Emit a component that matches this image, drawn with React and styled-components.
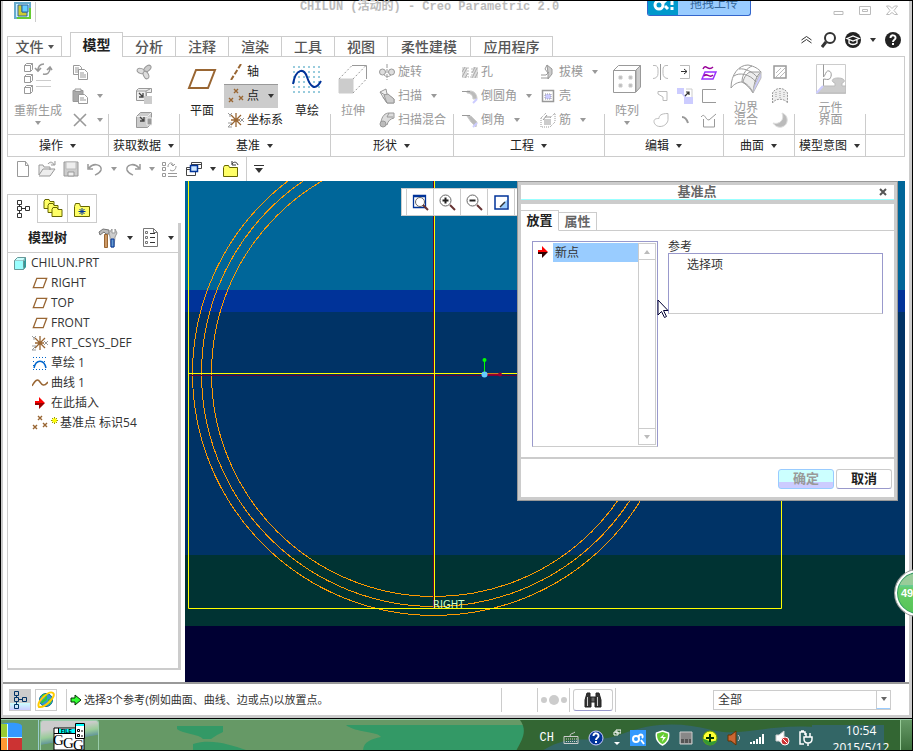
import React, { useState } from "react";
import styled, { createGlobalStyle } from "styled-components";

const GlobalStyle = createGlobalStyle`
  * {
    box-sizing: border-box;
  }
  body {
    margin: 0;
    background: #000;
    color: #333;
    font-family: "Liberation Sans", "Noto Sans CJK SC", sans-serif;
    font-size: 12px;
    line-height: 14px;
  }
  button, select, input {
    font: inherit;
    color: inherit;
    margin: 0;
    padding: 0;
    border: none;
    background: none;
  }
  svg {
    display: block;
    flex: none;
  }
`;

/* ---------- window frame ---------- */

const Screen = styled.div`
  position: relative;
  display: flex;
  flex-direction: column;
  min-height: 100vh;
  padding: 1px;
  overflow: hidden;
  background: #000;
`;

const Window = styled.div`
  flex: 1;
  display: flex;
  flex-direction: column;
  background: #fff;
  border-left: 2px solid #ccc;
  border-right: 3px solid #ccc;
  border-bottom: 3px solid #ccc;
`;

const TitleBar = styled.header`
  position: relative;
  display: flex;
  align-items: flex-start;
  height: 31px;
  padding: 1px 11px 0 11px;
`;

const AppIcon = styled.div`
  height: 20px;
  padding-right: 4px;
  border-right: 1px solid #ccc;
`;

const Title = styled.h1`
  flex: 1;
  margin: -2px 0 0;
  padding-right: 10px;
  text-align: center;
  color: #bbb;
  font: bold 12px/14px "Liberation Mono", "Noto Sans CJK SC", monospace;
  white-space: pre;
`;

const WindowButtons = styled.div`
  display: flex;
  gap: 15px;
  padding-top: 3px;
`;

const UploadBadge = styled.button`
  position: absolute;
  top: 0;
  right: 158px;
  display: flex;
  width: 104px;
  height: 15px;
  overflow: hidden;
  border: 1px solid #3366cc;
  border-top: none;
  border-radius: 0 0 3px 3px;
  background: #99ccff;
  color: #336699;
`;

const BadgeText = styled.span`
  flex: 1;
  margin-top: -4px;
  font-size: 12px;
  line-height: 14px;
`;

/* ---------- tabs ---------- */

const TabRow = styled.nav`
  display: flex;
  align-items: flex-end;
  height: 24px;
  padding: 0 4px;
`;

const FileTab = styled.button`
  display: flex;
  align-items: center;
  justify-content: center;
  gap: 4px;
  width: 55px;
  height: 20px;
  margin-right: 8px;
  border: 1px solid #ccc;
  border-bottom: none;
  color: #555;
  font-size: 14px;
  font-weight: 500;
`;

const Tab = styled.button`
  width: ${(p) => p.$w || 53}px;
  height: ${(p) => (p.$active ? 25 : 20)}px;
  margin-bottom: ${(p) => (p.$active ? -1 : 0)}px;
  border: 1px solid #ccc;
  border-left-width: ${(p) => (p.$active ? 1 : 0)}px;
  border-bottom: none;
  background: #fff;
  color: ${(p) => (p.$active ? "#222" : "#555")};
  font-size: 14px;
  font-weight: ${(p) => (p.$active ? 700 : 500)};
  line-height: 18px;
  position: relative;
`;

const HeaderTools = styled.div`
  display: flex;
  align-items: center;
  gap: 9px;
  height: 16px;
  margin: 0 4px auto auto;
`;

const IconButton = styled.button`
  display: flex;
  align-items: center;
  justify-content: center;
`;

/* ---------- ribbon ---------- */

const Ribbon = styled.section`
  display: flex;
  margin: 0 4px;
  border: 1px solid #ccc;
`;

const GroupBox = styled.div`
  display: flex;
  flex-direction: column;
  ${(p) => (p.$w ? `flex: none; width: ${p.$w}px;` : "flex: 1;")}
  background: linear-gradient(#ccc, #ccc) right bottom / ${(p) => (p.$w ? 1 : 0)}px 42px no-repeat;
`;

const GroupBody = styled.div`
  display: flex;
  justify-content: ${(p) => (p.$center ? "center" : "flex-start")};
  height: 77px;
  padding-top: 3px;
`;

const GroupLabel = styled.button`
  display: flex;
  align-items: center;
  justify-content: center;
  gap: 7px;
  height: 22px;
  padding-right: 2px;
  border-top: 1px solid #ccc;
  color: #222;
`;

const BigButton = styled.button`
  display: flex;
  flex-direction: column;
  align-items: center;
  width: ${(p) => p.$w}px;
  height: 72px;
  color: ${(p) => (p.$off ? "#999" : "#222")};
  line-height: 12px;
`;

const BigIcon = styled.span`
  display: flex;
  align-items: center;
  height: 38px;
  margin-bottom: ${(p) => (p.$tight ? 4 : 7)}px;
`;

const BigCaret = styled.span`
  padding-top: 4px;
`;

const Column = styled.div`
  width: ${(p) => p.$w}px;
`;

const SmallButton = styled.button`
  display: flex;
  align-items: center;
  gap: 3px;
  width: ${(p) => (p.$on ? "54px" : "auto")};
  height: 24px;
  padding-left: 3px;
  background: ${(p) => (p.$on ? "#ccc" : "none")};
  box-shadow: ${(p) => (p.$on ? "inset 0 1px #999" : "none")};
  color: ${(p) => (p.$off ? "#999" : "#222")};
  white-space: nowrap;
`;

const SmallIcon = styled.span`
  display: flex;
  justify-content: center;
  width: 17px;
`;

const CaretSlot = styled.span`
  padding-left: 6px;
`;

/* ---------- quick access ---------- */

const QuickBar = styled.div`
  display: flex;
  align-items: center;
  gap: 7px;
  height: 24px;
  padding-left: 12px;
`;

const QuickSeparator = styled.span`
  align-self: stretch;
  width: 1px;
  background: #ccc;
`;

/* ---------- work area ---------- */

const Work = styled.main`
  flex: 1;
  display: flex;
  min-height: 501px;
  padding-right: 4px;
`;

const SidePanel = styled.aside`
  display: flex;
  flex-direction: column;
  width: 182px;
  padding: 13px 4px 12px;
`;

const SideTabs = styled.div`
  display: flex;
`;

const SideTab = styled.button`
  display: flex;
  align-items: center;
  justify-content: center;
  width: 30px;
  height: 29px;
  border: 1px solid #ccc;
  border-right-width: ${(p) => (p.$last ? 1 : 0)}px;
  border-bottom-width: ${(p) => (p.$active ? 0 : 1)}px;
`;

const TreeBox = styled.div`
  flex: 1;
  border: 1px solid #ccc;
  border-top: none;
  border-right-width: 3px;
  border-bottom-width: 2px;
`;

const TreeHead = styled.div`
  display: flex;
  align-items: center;
  gap: 9px;
  height: 30px;
  padding: 0 4px 0 20px;
  border-bottom: 1px solid #ccc;
`;

const TreeTitle = styled.h2`
  flex: 1;
  margin: 0;
  color: #222;
  font-size: 13px;
  font-weight: 700;
`;

const TreeList = styled.ul`
  margin: 0;
  padding: 0;
  list-style: none;
  font-family: "Open Sans", "Noto Sans CJK SC", sans-serif;
`;

const TreeRow = styled.li`
  display: flex;
  align-items: center;
  gap: 2px;
  height: 20px;
  padding-left: ${(p) => (p.$root ? 2 : 22)}px;
  white-space: nowrap;
`;

const TreeIcon = styled.span`
  display: flex;
  justify-content: center;
  width: 19px;
`;

const Canvas = styled.div`
  position: relative;
  flex: 1;
  overflow: hidden;
  background: #000033;
`;

const Drawing = styled.svg`
  position: absolute;
  inset: 0;
  width: 100%;
  height: 100%;
`;

const ViewTools = styled.div`
  position: absolute;
  left: 216px;
  top: 7px;
  display: flex;
  height: 28px;
  padding-left: 4px;
  border: 1px solid #ccc;
  background: #fff;
`;

const ViewButton = styled.button`
  display: flex;
  align-items: center;
  justify-content: center;
  width: 27px;
  border-left: 1px solid #ccc;
`;

/* ---------- datum point dialog ---------- */

const Dialog = styled.section`
  position: absolute;
  left: 332px;
  top: 0;
  width: 381px;
  border: 1px solid #999;
  background: #ccc;
  padding: 3px;
`;

const DialogTitle = styled.div`
  display: flex;
  align-items: center;
  height: 15px;
  padding: 0 7px 0 18px;
  border-bottom: 1px solid #99ffff;
  background: #fff;
  color: #666;
  font-weight: 700;
`;

const DialogName = styled.h2`
  flex: 1;
  margin: 0;
  padding-right: 24px;
  text-align: center;
  font-size: 13px;
  line-height: 14px;
`;

const DialogBody = styled.div`
  margin-top: 4px;
  background: #fff;
`;

const DialogTabs = styled.div`
  display: flex;
  align-items: flex-end;
  height: 27px;
  box-shadow: inset 0 -1px #ccc;
`;

const DialogTab = styled.button`
  width: 38px;
  height: ${(p) => (p.$active ? 21 : 19)}px;
  border-top: 1px solid #ccc;
  border-right: 1px solid #ccc;
  border-bottom: 1px solid ${(p) => (p.$active ? "#fff" : "#ccc")};
  background: #fff;
  color: ${(p) => (p.$active ? "#222" : "#666")};
  font-size: 13px;
  font-weight: 700;
`;

const DialogFields = styled.div`
  display: flex;
  align-items: flex-start;
  gap: 10px;
  height: 226px;
  padding: 10px 10px 0 11px;
`;

const PointList = styled.div`
  display: flex;
  width: 126px;
  height: 206px;
  border: 1px solid #9999cc;
  border-bottom-color: #ccc;
`;

const PointRow = styled.div`
  flex: 1;
  display: flex;
  align-items: center;
  height: 20px;
  padding-left: 4px;
`;

const PointName = styled.span`
  flex: 1;
  height: 19px;
  margin-left: 4px;
  padding: 3px 2px;
  background: #99ccff;
`;

const ScrollBar = styled.div`
  display: flex;
  flex-direction: column;
  justify-content: space-between;
  width: 18px;
  margin: 1px 1px 1px 0;
  border: 1px solid #ccc;
`;

const ScrollButton = styled.button`
  display: flex;
  align-items: center;
  justify-content: center;
  height: 16px;
  border: 0 solid #ccc;
  border-bottom-width: ${(p) => (p.$up ? 1 : 0)}px;
  border-top-width: ${(p) => (p.$up ? 0 : 1)}px;
`;

const References = styled.div`
  width: 215px;
  line-height: 12px;
`;

const ReferenceBox = styled.div`
  height: 61px;
  padding: 5px 18px;
  border: 1px solid #9999cc;
  border-bottom-color: #ccc;
`;

const DialogFooter = styled.div`
  display: flex;
  justify-content: flex-end;
  gap: 2px;
  height: 38px;
  margin-top: 2px;
  padding: 10px 2px 0;
  background: #fff;
`;

const DialogButton = styled.button`
  width: 56px;
  height: 20px;
  border: 1px solid ${(p) => (p.$off ? "#99ccff" : "#ccc")};
  border-bottom-color: ${(p) => (p.$off ? "#99ccff" : "#9999cc")};
  border-radius: 3px;
  background: ${(p) => (p.$off ? "linear-gradient(#ccffff 65%, #ccccff 65%)" : "#fff")};
  color: ${(p) => (p.$off ? "#999" : "#222")};
  font-size: 13px;
  font-weight: 700;
  line-height: 16px;
`;

const Cursor = styled.div`
  position: absolute;
  left: 472px;
  top: 118px;
`;

/* ---------- status bar ---------- */

const StatusBar = styled.footer`
  display: flex;
  align-items: center;
  height: 33px;
  padding: 0 18px 0 6px;
  border-top: 2px solid #999;
`;

const StatusButton = styled.button`
  display: flex;
  align-items: center;
  justify-content: center;
  width: 22px;
  height: 22px;
  margin-right: 4px;
  border: 1px solid #ccc;
  background: ${(p) => (p.$on ? "linear-gradient(#ccc 65%, #ccffff 65%, #ccccff)" : "#fff")};
`;

const StatusText = styled.p`
  flex: 1;
  display: flex;
  align-items: center;
  gap: 2px;
  height: 22px;
  margin: 0 0 0 5px;
  padding-left: 3px;
  border-left: 1px solid #ccc;
  font-size: 11px;
  white-space: nowrap;
`;

const StatusCell = styled.div`
  display: flex;
  align-items: center;
  justify-content: center;
  width: ${(p) => p.$w}px;
  height: 24px;
  border-left: 1px solid #ccc;
`;

const SearchButton = styled.button`
  display: flex;
  align-items: center;
  justify-content: center;
  width: 40px;
  height: 22px;
  border: 1px solid #ccc;
  border-bottom-color: #9999cc;
  border-radius: 3px;
`;

const FilterField = styled.div`
  position: relative;
  width: 178px;
  height: 20px;
`;

const FilterSelect = styled.select`
  appearance: none;
  width: 100%;
  height: 100%;
  padding-left: 4px;
  border: 1px solid #ccc;
  border-radius: 0;
  background: #fff;
`;

const FilterArrow = styled.span`
  position: absolute;
  top: 1px;
  right: 1px;
  bottom: 1px;
  display: flex;
  align-items: center;
  justify-content: center;
  width: 14px;
  border-left: 1px solid #ccc;
  border-bottom: 1px solid #99ccff;
  pointer-events: none;
`;

/* ---------- system task bar ---------- */

const TaskBar = styled.div`
  position: relative;
  display: flex;
  height: 31px;
  margin-top: 1px;
  overflow: hidden;
  border-top: 1px solid #99ccaa;
  background: #669966;
`;

const StartButton = styled.button`
  position: relative;
  width: 38px;
  border-right: 1px solid #99cccc;
`;

const TaskButton = styled.button`
  position: relative;
  display: flex;
  align-items: flex-end;
  justify-content: center;
  width: 59px;
  margin-left: 1px;
  border: 1px solid #99ccaa;
  border-bottom: none;
  border-radius: 3px 3px 0 0;
  background: linear-gradient(170deg, #ccc 25%, #99cc99 45%, #669999 60%, #669966 62%);
`;

const Tray = styled.div`
  position: relative;
  display: flex;
  gap: 9px;
  height: 36px;
  margin-left: auto;
  align-items: center;
  color: #fff;
`;

const InputLang = styled.span`
  font: 12px/14px "Liberation Mono", monospace;
`;

const Clock = styled.time`
  width: 78px;
  height: 36px;
  padding-top: 2px;
  text-align: center;
  font: 12px/17px "Open Sans", sans-serif;
`;

const ShowDesktop = styled.button`
  position: relative;
  width: 12px;
  height: 36px;
  border-left: 1px solid #99cc99;
  background: linear-gradient(#669966, #336633);
`;

const SpeedBall = styled.div`
  position: absolute;
  right: -28px;
  top: 570px;
  width: 46px;
  height: 46px;
  padding: 14px 4px;
  border: 2px solid #fff;
  border-radius: 50%;
  background: linear-gradient(#99cc99 30%, #66cc99 31%, #66cc66 40%, #55c455);
  box-shadow: inset 0 0 0 1px #339966, 0 0 0 1px #999;
  color: #fff;
  font-size: 11px;
  font-weight: 700;
`;

/* ---------- icons ---------- */

const Ico = ({ w = 16, h = 16, c = "#999", s = 1, children }) => (
  <svg width={w} height={h} viewBox={`0 0 ${w} ${h}`} fill="none" stroke={c} strokeWidth={s}>
    {children}
  </svg>
);

const Caret = ({ c = "#333", up }) => (
  <svg width="6" height="4" viewBox="0 0 6 4">
    <path d={up ? "M0 4h6L3 0z" : "M0 0h6L3 4z"} fill={c} />
  </svg>
);

const Plane = ({ w = 16, h = 12, s = 1.3 }) => (
  <Ico w={w} h={h} c="#996633" s={s}>
    <path d={`M${w * 0.3} ${s}H${w - s}L${w * 0.7} ${h - s}H${s}Z`} />
  </Ico>
);

const Csys = () => (
  <Ico>
    <path d="M8 1v14M3 3l10 10M13 3L3 13M3 8h9" stroke="#996633" strokeWidth="1.3" />
    <path d="M0 1l2 2 2-2M2 3v2M0 11h4l-4 4h4M12 6l4 4M16 6l-4 4" />
  </Ico>
);

const Crosses = () => (
  <Ico c="#996633" s={1.4}>
    <path d="M6 1l4 4M10 1L6 5M1 10l4 4M5 10l-4 4M11 8l4 4M15 8l-4 4" />
  </Ico>
);

const Wave = () => (
  <Ico c="#996633" s={1.5} h={12}>
    <path d="M0 9C4 2 6 2 8 5s4 5 8 0" />
  </Ico>
);

const SketchIcon = () => (
  <svg width="30" height="28" viewBox="0 0 30 28" fill="none">
    <path
      d="M1 2h28M1 7h28M1 12h28M1 17h28M1 22h28M1 27h28"
      stroke="#99ccdd"
      strokeWidth="2"
      strokeDasharray="2 3"
    />
    <path d="M1 19C4 3 12 3 15 12s8 15 14 4" stroke="#003399" strokeWidth="2" />
  </svg>
);

const SketchSmall = () => (
  <Ico w={14} h={13} c="#0066cc">
    <path d="M0 .5h14M0 4.5h3M11 4.5h3M0 8.5h2M12 8.5h2M0 12.500h14" strokeDasharray="1 2" />
    <path d="M1 11C3 2 11 2 13 11" strokeWidth="1.500" />
  </Ico>
);

const RedArrow = ({ c = "#f00", d = "#900" }) => (
  <svg width="12" height="12" viewBox="0 0 12 12">
    <path d="M1 4h4V0l6 6H1z" fill={c} />
    <path d="M1 6h10l-6 6V8H1z" fill={d} />
  </svg>
);

const Cube = () => (
  <Ico w={14} h={14} c="#669999">
    <path d="M1.5 4.5h9v9h-9z" fill="#99ffff" />
    <path d="M1.5 4.5l3-3h8l-2 3M12.5 1.5v9l-2 3" fill="#ccffff" />
    <path d="M11 5l2-3v9l-2 2z" fill="#339999" stroke="none" />
  </Ico>
);

const Regenerate = () => (
  <Ico w={30} h={34}>
    {[3, 14, 25].map((y) => (
      <path key={y} d={`M1.5 ${y}.5h6v6h-6zM1.5 ${y}.5l2-2h6v6l-2 2M7.5 ${y}.5l2-2`} />
    ))}
    <path d="M21 2c-4 0-6 2-6 7M12 6l3 3 3-3M20 12c4 1 7-1 7-6M24 8l3-3 2 3" strokeWidth="1.6" />
    <path d="M13 18.5h15M13 24.5h15" stroke="#ccc" />
  </Ico>
);

const CopyIcon = () => (
  <Ico>
    <path d="M1.5 1.5h6l2 2v7h-8zM3 4h4M3 6h4M3 8h3" />
    <path d="M6.5 5.5h6l3 3v7h-9z" fill="#fff" />
    <path d="M8 9h4M8 11h6M8 13h6" />
  </Ico>
);

const PasteIcon = () => (
  <Ico>
    <path d="M1 2.5h10v11H1z" fill="#aaa" />
    <path d="M3 3.5h6V1H3z" fill="#eee" />
    <path d="M6.5 6.5h6l3 3v6h-9z" fill="#fff" />
    <path d="M8 10h4M8 12h6" />
  </Ico>
);

const CloseCross = ({ size = 14, c = "#999", s = 1.6 }) => (
  <Ico w={size} h={size} c={c} s={s}>
    <path d={`M1 1l${size - 2} ${size - 2}M${size - 1} 1L1 ${size - 1}`} />
  </Ico>
);

const DataClover = () => (
  <Ico>
    <ellipse cx="5" cy="7" rx="4" ry="2.5" fill="#ddd" transform="rotate(20 5 7)" />
    <ellipse cx="11.5" cy="4.5" rx="4" ry="2.5" fill="#ccc" transform="rotate(-40 11.5 4.5)" />
    <ellipse cx="10" cy="11" rx="2.5" ry="4" fill="#ddd" transform="rotate(-25 10 11)" />
  </Ico>
);

const DataImport = () => (
  <Ico>
    <path d="M.5 2.5l2-2h13v4h-5v6l-2 2h-8z" fill="#eee" />
    <path d="M.5 3H10l4-2M10 3v8" />
    <path d="M8 8h8v8H8z" fill="#ccc" stroke="none" />
    <path d="M3 5l4 4M7 5v4H3" stroke="#444" strokeWidth="1.3" />
  </Ico>
);

const DataShrink = () => (
  <Ico>
    <path d="M.5 4.5l4-4h11v11l-4 4H.5z" fill="#ccc" />
    <path d="M.5 4.5h11l4-4" stroke="#eee" />
    <path d="M11 6h5v7h-5z" fill="#999" stroke="#eee" />
    <path d="M4 5l4 4M8 5v4H4" stroke="#444" strokeWidth="1.3" />
  </Ico>
);

const AxisIcon = () => (
  <Ico c="#996633" s={2}>
    <path d="M13 0L3 16" strokeDasharray="5 2" />
  </Ico>
);

const Extrude = () => (
  <Ico w={30} h={30}>
    <path d="M1 15h14v14H1z" fill="#ccc" stroke="#ccc" />
    <path d="M14 1.5h14.500V15" />
    <path d="M1 15L14 1.5M15 15L28 1.5M15 29L28.5 15" strokeDasharray="2 2" />
  </Ico>
);

const Revolve = () => (
  <Ico>
    <path d="M8 0v16" strokeDasharray="4 1" />
    <ellipse cx="3.5" cy="8" rx="3" ry="3" fill="#ddd" />
    <ellipse cx="12.5" cy="8" rx="3" ry="3" fill="#ddd" />
    <path d="M5 11c2 2 5 2 7 0" />
  </Ico>
);

const Sweep = () => (
  <Ico>
    <path d="M1 4l6-3 1 5 7 5v4H8L4 9z" fill="#eee" />
    <path d="M5 7l4-1 6 5v4H8z" fill="#ccc" />
    <path d="M1 4l5 3M8 15l-4-6" />
  </Ico>
);

const Blend = () => (
  <Ico>
    <path d="M2 10C3 4 6 1 10 1h5v5C11 7 9 9 8 13z" fill="#ddd" />
    <circle cx="4" cy="12" r="3" fill="#bbb" />
    <path d="M10 1l-2 4h6" />
  </Ico>
);

const Hole = () => (
  <Ico>
    <path d="M0 3h5v11H0zM11 3h5v11h-5z" fill="#ddd" stroke="none" />
    <path d="M0 13L5 4M3 14l3-5M0 8l3-5M10 14l5-10M13 14l3-6M10 9l3-6" stroke="#aaa" />
    <path d="M6 3v10h4V3" stroke="#bbb" strokeDasharray="2 1" />
  </Ico>
);

const Round = ({ chamfer }) => (
  <Ico>
    <path d={chamfer ? "M5 4h4l6 6-1 5-5-5z" : "M5 3h3c4 0 7 3 7 8h-4c0-4-3-6-6-6z"} fill="#bbb" stroke="#ccc" />
    <path d="M0 3.5h8" stroke="#999" />
    <path d="M11 15l4-4" stroke="#ccccff" strokeWidth="2" />
  </Ico>
);

const Draft = () => (
  <Ico>
    <path d="M7 1l5 4v5l-4 5V9z" fill="#ccc" />
    <path d="M7 1L5 5l3 4M1 11h5l3-3M1 14h8" />
  </Ico>
);

const Shell = () => (
  <Ico w={14} h={14}>
    <path d="M1.5 1.5h11v11h-11z" strokeWidth="1.500" />
    <path d="M4 5h6v5H4z" fill="#ccccff" stroke="#999" strokeDasharray="1 1" />
  </Ico>
);

const Rib = () => (
  <Ico>
    <path d="M1 6v9h9M1 6l5-5M10 15l5-5V1l-5 5" strokeDasharray="1 1" />
    <path d="M4 7h7v6H4z" fill="#ccc" stroke="none" />
    <path d="M3 8l4-5M5 5h6" />
  </Ico>
);

const Pattern = () => (
  <Ico w={30} h={30}>
    <path d="M1.5 6.5h22v22h-22zM1.5 6.5l5-5h22l-5 5" />
    <path d="M24 6l4.500-4.500V23L24 28z" fill="#ccc" />
    <path d="M7 12h3v3H7zM17 12h3v3h-3zM7 20h3v3H7zM17 20h3v3h-3z" fill="#bbb" stroke="#ccc" />
  </Ico>
);

const Mirror = () => (
  <Ico c="#bbb">
    <path d="M7.5 0v16" stroke="#999" />
    <path d="M0 1.5h2c2 0 3 2 3 4v4c0 3-2 5-5 5M15 1.5h-2c-2 0-3 2-3 4v4c0 3 2 5 5 5" />
  </Ico>
);

const Extend = () => (
  <Ico c="#bbb">
    <path d="M3 1.5h9.500v13H3" />
    <path d="M4 7.5h6M7 5l3 2.500L7 10" stroke="#333" />
  </Ico>
);

const Project = () => (
  <Ico c="#990099" s={1.5}>
    <path d="M2 5c3-6 5 3 10-2" />
    <path d="M4 8h11l-3 7H1z" stroke="#9933ff" />
    <path d="M3 12c3-4 5 3 9-1" />
  </Ico>
);

const Trim = () => (
  <Ico c="#bbb">
    <path d="M5 3.5h9v9h-4V9L5 6z" />
  </Ico>
);

const Offset = () => (
  <Ico c="#ccccff" s={2}>
    <path d="M1 1h5v4H1zM8 10h7v5H8zM5 5l4 5" fill="#ccccff" />
    <path d="M9 1h6v8" stroke="#ccc" strokeWidth="1" />
    <path d="M8 8l4-4M9 4h3v3" stroke="#333" strokeWidth="1.200" />
  </Ico>
);

const Thicken = () => (
  <Ico>
    <path d="M15 1.5H1.500v13H15" />
  </Ico>
);

const Merge = () => (
  <Ico c="#bbb">
    <path d="M15 1.5v6c0 3-3 7-8 7-4 0-6-3-6-5 0-3 3-3 5-3 0-3 2-5 9-5z" />
  </Ico>
);

const Intersect = () => (
  <Ico>
    <path d="M5 5c3 0 5 3 6 6" strokeWidth="2" />
  </Ico>
);

const Solidify = () => (
  <Ico>
    <path d="M0 5c4-5 4 3 8 3l7-6M2.500 7v8h11V7" />
  </Ico>
);

const Boundary = () => (
  <Ico w={32} h={30}>
    <path d="M1 24C1 10 9 1 18 1c6 1 11 4 13 7-5 4-7 11-8 21-3-5-7-9-11-11-4 0-8 2-11 6z" fill="#fff" />
    <path d="M23 29c-1-3-4-8-10-11C14 13 17 9 20 8l11 0c-5 4-7 11-8 21z" fill="#eee" />
    <path d="M27 16l4-8v6l-8 15c0-5 2-9 4-13z" fill="#ccccff" stroke="#bbb" />
    <path d="M4 12c5-4 16-2 22 6M9 5c6-1 14 3 18 8M12 18C12 10 17 4 22 2" />
  </Ico>
);

const Fill = () => (
  <Ico w={14} h={14}>
    <path d="M1 1h12v12H1z" strokeWidth="1.500" />
    <path d="M3 8l5-5M3 12l9-9M7 12l5-5" stroke="#bbb" />
  </Ico>
);

const StyleSurface = () => (
  <Ico>
    <path d="M.5 15V5c3-6 12-6 15 0v10c-3-5-12-5-15 0z" fill="#eee" strokeDasharray="2 1" />
    <path d="M4 4v6M8 3v7M12 4v6" strokeDasharray="1 1" />
  </Ico>
);

const Freestyle = () => (
  <Ico>
    <path d="M10 1c7 2 7 12 0 14-4 1-7-1-9-4 6 2 12-3 9-10z" fill="#bbb" stroke="#ddd" />
  </Ico>
);

const Puzzle = () => (
  <Ico w={30} h={30}>
    <path d="M.5.5h29v29H.5z" stroke="#ccc" />
    <path d="M7.500.5V13c2-2 2-5 4-6 4-1 5 5 2 8-2 1-4 0-6 0v7" />
    <path d="M.5 29L7 22h12v-3c-4-1-4-5 3-5s8 4 4 5v3h4v7z" fill="#ccc" stroke="#bbb" />
    <path d="M.5 29L7 22" stroke="#ccccff" strokeWidth="2" />
  </Ico>
);

const Folder = ({ star }) => (
  <Ico w={18} h={16} c="#666600">
    <path d="M1.5 5.5l1-3h4l1 3h9v10h-15z" fill="#ffff66" />
    {star && <path d="M9 7v7M5.500 10.500h7M6.500 8l5 5M11.500 8l-5 5" stroke="#003399" />}
  </Ico>
);

const CloseFolder = () => (
  <Ico w={16} h={16} c="#666600">
    <path d="M.5 6.5l1-2h4l1 2h8v9H.5z" fill="#ffff66" />
    <path d="M15 4c-1-3-4-4-6-1M9 0v4h4" stroke="#333" />
  </Ico>
);

const Folders = () => (
  <Ico w={20} h={20} c="#666600">
    {[0, 4, 8].map((n) => (
      <path key={n} d={`M${1 + n} ${2.5 + n}l1-2h4l1 2h4v7h-10z`} fill="#ffff66" />
    ))}
  </Ico>
);

const TreeGlyph = ({ c = "#333" }) => (
  <Ico w={14} h={18} c={c}>
    <path d="M1.5.5h4v4h-4zM1.5 6.500h4v4h-4zM1.5 13.500h4v4h-4zM9.500 6.500h4v4h-4zM3.500 4.500v2M3.500 10.500v3M5.500 8.500h4" />
  </Ico>
);

const Tools = () => (
  <Ico w={20} h={20}>
    <path d="M1 4l4-3 6 1v4H8L6 4 2 7z" fill="#bbb" stroke="#777" />
    <path d="M6.500 6.500h3v13h-3z" fill="#cc9966" stroke="#996633" />
    <path d="M12 9l1 10h3l1-10 2-4-2-4v4h-3V1l-3 4z" fill="#ccc" />
    <path d="M13 11h3v8h-3z" fill="#6699cc" stroke="#003399" />
  </Ico>
);

const Report = () => (
  <Ico w={17} h={19} c="#777">
    <path d="M1.500.500h10l4 4v14h-14zM11.500.500v4h4" />
    <path d="M8 5.500h5M8 9.500h5M8 14.500h5" stroke="#333" />
    <path d="M3.500 3.500h2v2h-2zM3.500 8.500h2v2h-2zM3.500 13.500h2v2h-2z" />
  </Ico>
);

const Magnifier = ({ sign, frame }) => (
  <Ico w={17} h={17} c="#666">
    {frame && <path d="M1.500 1.500h12v12h-12zM1 2.500h13" stroke="#003399" strokeWidth="1.300" />}
    <circle cx={frame ? 8 : 6.5} cy={frame ? 8 : 6.5} r={frame ? 4.5 : 5.5} fill="#fff" />
    {sign && <path d={sign} stroke="#222" strokeWidth="2" />}
    <path d="M11 11l5 5" stroke="#663333" strokeWidth="2" />
  </Ico>
);

/* ---------- data ---------- */

const groups = [
  {
    name: "操作",
    w: 101,
    cols: [
      { big: "重新生成", w: 60, icon: <Regenerate />, off: true, caret: true },
      {
        w: 36,
        off: true,
        items: [
          { icon: <CopyIcon /> },
          { icon: <PasteIcon />, caret: true },
          { icon: <CloseCross />, caret: true },
        ],
      },
    ],
  },
  {
    name: "获取数据",
    w: 71,
    center: true,
    cols: [
      {
        w: 24,
        off: true,
        items: [{ icon: <DataClover /> }, { icon: <DataImport /> }, { icon: <DataShrink /> }],
      },
    ],
  },
  {
    name: "基准",
    w: 151,
    cols: [
      { big: "平面", w: 44, icon: <Plane w={30} h={22} s={2} /> },
      {
        w: 61,
        items: [
          { icon: <AxisIcon />, text: "轴" },
          { icon: <Crosses />, text: "点", caret: true, on: true },
          { icon: <Csys />, text: "坐标系" },
        ],
      },
      { big: "草绘", w: 44, icon: <SketchIcon /> },
    ],
  },
  {
    name: "形状",
    w: 123,
    cols: [
      { big: "拉伸", w: 44, icon: <Extrude />, off: true },
      {
        w: 76,
        off: true,
        items: [
          { icon: <Revolve />, text: "旋转" },
          { icon: <Sweep />, text: "扫描", caret: true },
          { icon: <Blend />, text: "扫描混合" },
        ],
      },
    ],
  },
  {
    name: "工程",
    w: 151,
    indent: true,
    cols: [
      {
        w: 78,
        off: true,
        items: [
          { icon: <Hole />, text: "孔" },
          { icon: <Round />, text: "倒圆角", caret: true },
          { icon: <Round chamfer />, text: "倒角", caret: true },
        ],
      },
      {
        w: 66,
        off: true,
        items: [
          { icon: <Draft />, text: "拔模", caret: true },
          { icon: <Shell />, text: "壳" },
          { icon: <Rib />, text: "筋", caret: true },
        ],
      },
    ],
  },
  {
    name: "编辑",
    w: 119,
    cols: [
      { big: "阵列", w: 44, icon: <Pattern />, off: true, caret: true },
      { w: 24, items: [{ icon: <Mirror /> }, { icon: <Trim /> }, { icon: <Merge /> }] },
      { w: 24, items: [{ icon: <Extend /> }, { icon: <Offset /> }, { icon: <Intersect /> }] },
      { w: 24, items: [{ icon: <Project /> }, { icon: <Thicken /> }, { icon: <Solidify /> }] },
    ],
  },
  {
    name: "曲面",
    w: 71,
    cols: [
      { big: "边界\n混合", w: 44, icon: <Boundary />, off: true },
      { w: 24, items: [{ icon: <Fill /> }, { icon: <StyleSurface /> }, { icon: <Freestyle /> }] },
    ],
  },
  {
    name: "模型意图",
    w: 71,
    center: true,
    cols: [{ big: "元件\n界面", w: 60, icon: <Puzzle />, off: true }],
  },
];

const tabs = [
  { name: "分析" },
  { name: "注释" },
  { name: "渲染" },
  { name: "工具" },
  { name: "视图" },
  { name: "柔性建模", w: 83 },
  { name: "应用程序", w: 82 },
];

const tree = [
  { icon: <Cube />, text: "CHILUN.PRT", root: true },
  { icon: <Plane />, text: "RIGHT" },
  { icon: <Plane />, text: "TOP" },
  { icon: <Plane />, text: "FRONT" },
  { icon: <Csys />, text: "PRT_CSYS_DEF" },
  { icon: <SketchSmall />, text: "草绘 1" },
  { icon: <Wave />, text: "曲线 1" },
  { icon: <RedArrow />, text: "在此插入" },
  { icon: <Crosses />, text: "基准点 标识54", fresh: true },
];

/* ---------- parts ---------- */

const EngineeringIndent = styled.span`
  width: 4px;
`;

const EmptyLabel = styled.div`
  height: 22px;
  border-top: 1px solid #ccc;
`;

const RibbonColumn = ({ col }) => {
  if (col.big) {
    const lines = col.big.split("\n");
    return (
      <BigButton $w={col.w} $off={col.off}>
        <BigIcon $tight={lines.length > 1}>{col.icon}</BigIcon>
        {lines.map((line) => (
          <span key={line}>{line}</span>
        ))}
        {col.caret && (
          <BigCaret>
            <Caret c="#999" />
          </BigCaret>
        )}
      </BigButton>
    );
  }
  return (
    <Column $w={col.w}>
      {col.items.map((item, i) => (
        <SmallButton key={i} $off={col.off} $on={item.on}>
          <SmallIcon>{item.icon}</SmallIcon>
          {item.text}
          {item.caret && (
            <CaretSlot>
              <Caret c={col.off ? "#999" : "#333"} />
            </CaretSlot>
          )}
        </SmallButton>
      ))}
    </Column>
  );
};

const QuickAccess = () => (
  <QuickBar>
    <IconButton aria-label="新建">
      <Ico>
        <path d="M2.500.500h8l3 4v11h-11zM10.500.500v4h3" />
      </Ico>
    </IconButton>
    <IconButton aria-label="打开">
      <Ico w={18}>
        <path d="M1 14V4h4l1 2h6v3M1 14l4-6h12l-5 7H1M10 3c2-3 5-2 6 1M13 4h4V0" fill="#eee" />
      </Ico>
    </IconButton>
    <IconButton aria-label="保存">
      <Ico>
        <path d="M1 1h14v14H1z" fill="#ccc" />
        <path d="M3 1h10v7H3z" fill="#eee" stroke="#bbb" />
        <path d="M5 11h6v4H5z" fill="#eee" />
      </Ico>
    </IconButton>
    <IconButton aria-label="撤消">
      <Ico w={18} s={1.5}>
        <path d="M3 7c5-6 13-3 12 2-1 3-4 4-6 5M2 3v5h5" />
      </Ico>
    </IconButton>
    <Caret c="#999" />
    <IconButton aria-label="重做">
      <Ico w={18} s={1.5}>
        <path d="M15 7C10 1 2 4 3 9c1 3 4 4 6 5M16 3v5h-5" />
      </Ico>
    </IconButton>
    <Caret c="#999" />
    <IconButton aria-label="重新生成">
      <Ico>
        <path d="M.5 1.500h3v3h-3zM.5 6.500h3v3h-3zM.5 12.500h3v3h-3zM6 12.500h9M6 15.500h9M6 6c0-5 5-5 5-2M9 3l2 2 2-2M8 9c3 2 6 0 6-4" />
      </Ico>
    </IconButton>
    <IconButton aria-label="窗口">
      <Ico w={18} c="#444">
        <path d="M6.500 1.500h10v6h-10zM1.500 6.500h9v8h-9zM6 3.500h11M1 8.500h9" fill="#fff" />
        <path d="M5.500 4.500h7v6h-7z" stroke="#003399" fill="#cce6ff" strokeWidth="1.500" />
      </Ico>
    </IconButton>
    <Caret />
    <IconButton aria-label="关闭">
      <CloseFolder />
    </IconButton>
    <QuickSeparator />
    <Ico w={10} h={8} c="#333">
      <path d="M0 .5h10" />
      <path d="M1 3h8L5 8z" fill="#333" stroke="none" />
    </Ico>
  </QuickBar>
);

const ModelTree = () => (
  <SidePanel>
    <SideTabs>
      <SideTab $active aria-label="模型树">
        <TreeGlyph />
      </SideTab>
      <SideTab aria-label="文件夹浏览器">
        <Folders />
      </SideTab>
      <SideTab $last aria-label="收藏夹">
        <Folder star />
      </SideTab>
    </SideTabs>
    <TreeBox>
      <TreeHead>
        <TreeTitle>模型树</TreeTitle>
        <Tools />
        <Caret />
        <Report />
        <Caret />
      </TreeHead>
      <TreeList>
        {tree.map((node) => (
          <TreeRow key={node.text} $root={node.root}>
            <TreeIcon>{node.icon}</TreeIcon>
            {node.fresh && (
              <Ico w={7} h={12} c="#999900">
                <path d="M3.500 0v7M0 3.500h7M1 1l5 5M6 1L1 6" />
                <path d="M2 2h3v3H2z" fill="#ff0" stroke="#ff0" />
              </Ico>
            )}
            {node.text}
          </TreeRow>
        ))}
      </TreeList>
    </TreeBox>
  </SidePanel>
);

const PointDialog = () => (
  <Dialog>
    <DialogTitle>
      <DialogName>基准点</DialogName>
      <IconButton aria-label="关闭">
        <CloseCross size={8} c="#555" s={2} />
      </IconButton>
    </DialogTitle>
    <DialogBody>
      <DialogTabs>
        <DialogTab $active>放置</DialogTab>
        <DialogTab>属性</DialogTab>
      </DialogTabs>
      <DialogFields>
        <PointList>
          <PointRow>
            <RedArrow d="#300" />
            <PointName>新点</PointName>
          </PointRow>
          <ScrollBar>
            <ScrollButton $up aria-label="向上">
              <Caret c="#bbb" up />
            </ScrollButton>
            <ScrollButton aria-label="向下">
              <Caret c="#bbb" />
            </ScrollButton>
          </ScrollBar>
        </PointList>
        <References>
          参考
          <ReferenceBox>选择项</ReferenceBox>
        </References>
      </DialogFields>
    </DialogBody>
    <DialogFooter>
      <DialogButton $off disabled>
        确定
      </DialogButton>
      <DialogButton>取消</DialogButton>
    </DialogFooter>
  </Dialog>
);

const Viewport = () => (
  <Canvas>
    <Drawing>
      <rect width="100%" height="109" fill="#006699" />
      <rect y="109" width="100%" height="22" fill="#003399" />
      <rect y="131" width="100%" height="243" fill="#003366" />
      <rect y="374" width="100%" height="71" fill="#003333" />
      <g fill="none" stroke="#ff9900" shapeRendering="crispEdges">
        <circle cx="249.5" cy="192.5" r="242" />
        <circle cx="249.5" cy="192.5" r="233" />
        <circle cx="249.5" cy="192.5" r="223" />
      </g>
      <path d="M248.5 0v427M4 194.5h592" stroke="#660033" />
      <path d="M3.5 0v427.5h593V0M249.5 0v427M3 192.5h593" fill="none" stroke="#ffff00" />
      <path d="M299.5 193v-14" stroke="#00ff00" />
      <path d="M300 193.5h15" stroke="#990033" strokeWidth="2" />
      <circle cx="299.5" cy="179" r="2" fill="#00ff00" />
      <circle cx="315" cy="193.5" r="2" fill="#990033" />
      <circle cx="299.5" cy="193.5" r="3" fill="#66ccff" />
      <text x="248" y="427" fill="#ccffcc" fontSize="10" fontFamily="DejaVu Sans">
        RIGHT
      </text>
    </Drawing>
    <ViewTools>
      <ViewButton aria-label="重新调整">
        <Magnifier frame />
      </ViewButton>
      <ViewButton aria-label="放大">
        <Magnifier sign="M3.5 6.5h6M6.5 3.5v6" />
      </ViewButton>
      <ViewButton aria-label="缩小">
        <Magnifier sign="M3.5 6.5h6" />
      </ViewButton>
      <ViewButton aria-label="重画">
        <Ico w={15} h={15} c="#003399">
          <path d="M1 1h13v13H1z" strokeWidth="1.500" fill="#fff" />
          <path d="M6 13C8 8 11 6 13 5v8z" fill="#99ccff" stroke="none" />
          <path d="M6 12l5-5" stroke="#333" strokeWidth="1.500" />
        </Ico>
      </ViewButton>
      <ViewButton />
    </ViewTools>
    <PointDialog />
    <Cursor>
      <svg width="13" height="19" viewBox="0 0 13 19">
        <path d="M1 1v15l3.500-3.500 3 6 2-1-3-6H11z" fill="#fff" stroke="#000033" />
      </svg>
    </Cursor>
  </Canvas>
);

const Status = () => {
  const [filter, setFilter] = useState("全部");
  return (
    <StatusBar>
      <StatusButton $on aria-label="模型树">
        <TreeGlyph c="#003366" />
      </StatusButton>
      <StatusButton aria-label="浏览器">
        <Ico w={18} h={18}>
          <circle cx="9" cy="9" r="6.5" fill="#3399cc" stroke="#006699" />
          <path d="M5 5c3-2 5 1 4 3s-4 1-4 4M11 9c3 0 3 2 1 4" stroke="#33cc33" strokeWidth="2" />
          <path d="M2 16C-1 11 12-1 16 2s-8 15-14 14z" stroke="#ffcc00" strokeWidth="2" />
        </Ico>
      </StatusButton>
      <StatusText>
        <svg width="12" height="12" viewBox="0 0 12 12">
          <path d="M1 4h4V1l6 5-6 5V8H1z" fill="#33ff33" stroke="#003300" />
        </svg>
        选择3个参考(例如曲面、曲线、边或点)以放置点。
      </StatusText>
      <StatusCell $w={36} />
      <StatusCell $w={32}>
        <svg width="26" height="12" viewBox="0 0 26 12" fill="#ccc">
          <circle cx="3" cy="6" r="3" />
          <circle cx="13" cy="6" r="5" />
          <circle cx="23" cy="6" r="3" />
        </svg>
      </StatusCell>
      <StatusCell $w={46}>
        <SearchButton aria-label="查找">
          <Ico w={18} c="#222">
            <path d="M3 1h3v3l1 3v8H1V8zM15 1h-3v3l-1 3v8h6V8z" fill="#333" />
            <path d="M7 5h4v5H7z" fill="#666" />
            <path d="M3.5 5v9M13.5 5v9" stroke="#ccc" />
          </Ico>
        </SearchButton>
      </StatusCell>
      <StatusCell $w={98} />
      <FilterField>
        <FilterSelect aria-label="过滤器" value={filter} onChange={(e) => setFilter(e.target.value)}>
          <option>全部</option>
          <option>几何</option>
          <option>基准</option>
        </FilterSelect>
        <FilterArrow>
          <Caret c="#666" />
        </FilterArrow>
      </FilterField>
    </StatusBar>
  );
};

const TaskPattern = () => (
  <Drawing>
    <path
      d="M176 6h46v6l-6 3-6 4h-8c-4-5-20-5-26-10zM345 5h240v26H362c0-9 8-12 18-14-4-6-25-4-35-12zM192 24c20-6 40 2 56 7h-56z"
      fill="#339966"
    />
    <svg x="100%" overflow="visible">
      <path d="M-396 31c6-11 12-20 4-31H0v31z" fill="#336633" />
      <path d="M-370 31c30-20 50-5 80-17s60-12 90-4 60-8 110-2v23zM-100 5h72v26h-72z" fill="#336666" />
    </svg>
  </Drawing>
);

const SystemTray = () => (
  <Tray>
    <InputLang>CH</InputLang>
    <Ico w={16} h={14} c="#ccc">
      <path d="M1 5.5h14v7H1z" />
      <path d="M3 8h11M3 10.5h11" strokeDasharray="1 1" />
      <path d="M7 5c0-3 3-2 5-4" />
    </Ico>
    <Ico>
      <circle cx="8" cy="8" r="7" fill="#003399" stroke="#ccccff" />
      <path d="M5.5 6c0-4 5.500-3 5 0 0 2-2.500 1.500-2.500 4M8 11v2" stroke="#fff" strokeWidth="2" />
    </Ico>
    <Ico w={8} h={18} c="#fff">
      <path d="M3 1h5v3H3zM1 3h4v3H1z" />
      <path d="M1 13h6l-3 3z" fill="#fff" stroke="none" />
    </Ico>
    <Ico>
      <path d="M0 0h16v16H0z" fill="#3399ff" stroke="none" />
      <circle cx="6" cy="9" r="3" stroke="#fff" strokeWidth="2" />
      <path d="M8 7c3-5 6-1 4 1M11 10l3 4" stroke="#fff" strokeWidth="2" />
    </Ico>
    <Ico w={15}>
      <path d="M7.5 1l6 2c1 6-2 10-6 12-4-2-7-6-6-12z" fill="#66cc33" stroke="#fff" strokeWidth="1.500" />
      <path d="M9 4L5 8h3l-1 4 4-5H8z" fill="#fff" stroke="none" />
    </Ico>
    <Ico w={14} h={14} c="#ccc">
      <path d="M1 1h12v12H1z" fill="#888" />
      <path d="M2 9h10M2 11h10" strokeDasharray="3 1" stroke="#222" />
    </Ico>
    <Ico>
      <circle cx="8" cy="8" r="7" fill="#ffff33" stroke="#669900" />
      <path d="M1 9c4-1 6 5 14 1-2 7-12 7-14-1z" fill="#339933" stroke="none" />
      <path d="M8 4v8M4 8h8" stroke="#003300" strokeWidth="2" />
    </Ico>
    <Ico w={14}>
      <path d="M1 5h3l5-4v14l-5-4H1z" fill="#cc6633" stroke="#663300" />
      <path d="M11 5c2 2 2 4 0 6" stroke="#ccc" />
    </Ico>
    <Ico w={16} c="#fff" s={2}>
      <path d="M1 14v-2M4 14v-3M7 14V9M10 14V7M13 14V4" />
    </Ico>
    <Ico w={15}>
      <path d="M1 5h3l5-4v14l-5-4H1z" fill="#fff" stroke="#ccc" />
      <circle cx="10" cy="11" r="4" fill="#cc3333" stroke="#fff" />
      <path d="M7.5 8.5l5 5" stroke="#fff" />
    </Ico>
    <Ico w={14} c="#fff" s={1.5}>
      <path d="M5 14H1V2h5v3M2 1h3M5 7h8v2c0 3-2 4-4 4s-4-1-4-4zM7 7V3M11 7V3M9 13v3" />
    </Ico>
    <Clock>
      10:54
      <br />
      2015/5/12
    </Clock>
  </Tray>
);

const App = () => {
  return (
    <Screen>
      <GlobalStyle />
      <Window>
        <TitleBar>
          <AppIcon>
            <Ico w={17} h={17} c="#66aacc">
              <path d="M1 1h15v15H1z" fill="#cceeff" strokeWidth="2" />
              <path d="M4 3h4v7h5v4H4z" fill="#cccc33" stroke="#336699" />
              <path d="M8 3h6v7H8z" fill="#66ccff" stroke="#336699" />
              <path d="M3 16h13V6" stroke="#66cc33" strokeWidth="2" />
            </Ico>
          </AppIcon>
          <Title>CHILUN (活动的) - Creo Parametric 2.0</Title>
          <UploadBadge>
            <Ico w={30} h={15} c="#fff" s={3}>
              <path d="M0 0h30v15H0z" fill="#0099cc" stroke="none" />
              <circle cx="11" cy="4" r="4" />
              <path d="M14 3l5-5M17 5l3 3M24 0v4M24 6v3" />
            </Ico>
            <BadgeText>拖拽上传</BadgeText>
          </UploadBadge>
          <WindowButtons>
            <IconButton aria-label="最小化">
              <Ico w={11} h={11} c="#bbb">
                <path d="M1 6.5h9v3H1z" />
              </Ico>
            </IconButton>
            <IconButton aria-label="最大化">
              <Ico w={12} h={11} c="#bbb">
                <path d="M.5 1.500h11v8H.5zM3.500 4.500h5v2h-5z" />
              </Ico>
            </IconButton>
            <IconButton aria-label="关闭">
              <Ico w={12} h={11} c="#bbb">
                <path d="M.5 1h3L6 3.500 8.500 1h3L8 5.500l3.500 4h-3L6 7.500l-2.500 2h-3L4 5.500z" />
              </Ico>
            </IconButton>
          </WindowButtons>
        </TitleBar>
        <TabRow>
          <FileTab>
            文件
            <Caret c="#555" />
          </FileTab>
          <Tab $active>模型</Tab>
          {tabs.map((tab) => (
            <Tab key={tab.name} $w={tab.w}>
              {tab.name}
            </Tab>
          ))}
          <HeaderTools>
            <IconButton aria-label="最小化功能区">
              <Ico w={11} h={8} c="#333">
                <path d="M.5 4l5-3.500 5 3.500M.5 7l5-3.500 5 3.500" />
              </Ico>
            </IconButton>
            <IconButton aria-label="搜索">
              <Ico w={15} c="#333" s={2}>
                <circle cx="9" cy="6" r="5" />
                <path d="M5 10l-4 5" strokeWidth="3" />
              </Ico>
            </IconButton>
            <IconButton aria-label="学习连接">
              <Ico w={16} c="#fff">
                <circle cx="8" cy="8" r="8" fill="#222" stroke="none" />
                <path d="M2 6.500L8 4l6 2.500L8 9zM4 8v3c2 2 6 2 8 0V8" strokeWidth="1.300" />
              </Ico>
            </IconButton>
            <Caret />
            <IconButton aria-label="帮助">
              <Ico w={16} c="#fff" s={2}>
                <circle cx="8" cy="8" r="8" fill="#222" stroke="none" />
                <path d="M5.5 6c0-4 5.500-3 5 0 0 2-2.500 1.500-2.500 4M8 11v2" />
              </Ico>
            </IconButton>
          </HeaderTools>
        </TabRow>
        <Ribbon>
          {groups.map((group) => (
            <GroupBox key={group.name} $w={group.w}>
              <GroupBody $center={group.center}>
                {group.indent && <EngineeringIndent />}
                {group.cols.map((col, i) => (
                  <RibbonColumn key={i} col={col} />
                ))}
              </GroupBody>
              <GroupLabel>
                {group.name}
                <Caret />
              </GroupLabel>
            </GroupBox>
          ))}
          <GroupBox>
            <GroupBody />
            <EmptyLabel />
          </GroupBox>
        </Ribbon>
        <QuickAccess />
        <Work>
          <ModelTree />
          <Viewport />
        </Work>
        <Status />
      </Window>
      <TaskBar>
        <TaskPattern />
        <StartButton aria-label="开始">
          <Ico w={22} h={30}>
            <path d="M0 4c8-2 20-2 21 2v12H0z" fill="#3399ff" stroke="none" />
            <path d="M0 4h6v13H0z" fill="#99cc33" stroke="none" />
            <path d="M0 18h6v12H0z" fill="#ff9933" stroke="none" />
            <path d="M7 18h14v12H7z" fill="#cc3333" stroke="none" />
            <path d="M0 17.5h21M6.5 4v26" stroke="#ccffff" />
          </Ico>
        </StartButton>
        <TaskButton aria-label="FILE GGG">
          <svg width="34" height="27" viewBox="0 0 34 27">
            <path d="M1 5h30v22H1z" fill="#fff" stroke="#000" />
            <path d="M6 6h16v4H6z" fill="#00ffff" />
            <path d="M1 10.5h22M5.5 5v5" stroke="#000" />
            <text x="8" y="10" fontSize="5" fontWeight="700" fontFamily="Liberation Sans" fill="#000">
              FILE
            </text>
            <path d="M22.500.500h9v15h-9z" fill="#fff" stroke="#000" />
            <path d="M23 1h8v2h-8z" fill="#00ffff" />
            <path d="M24.5 6.500h2v2h-2zM24.500 11.500h2v2h-2zM28 8h2M28 13h2" fill="none" stroke="#000" />
            <g fontSize="15" fontFamily="Liberation Serif" fill="#000">
              <text x="0" y="22">G</text>
              <text x="10" y="25">G</text>
              <text x="20" y="27">G</text>
            </g>
          </svg>
        </TaskButton>
        <SystemTray />
        <ShowDesktop aria-label="显示桌面" />
      </TaskBar>
      <SpeedBall>49</SpeedBall>
    </Screen>
  );
};

export default App;
